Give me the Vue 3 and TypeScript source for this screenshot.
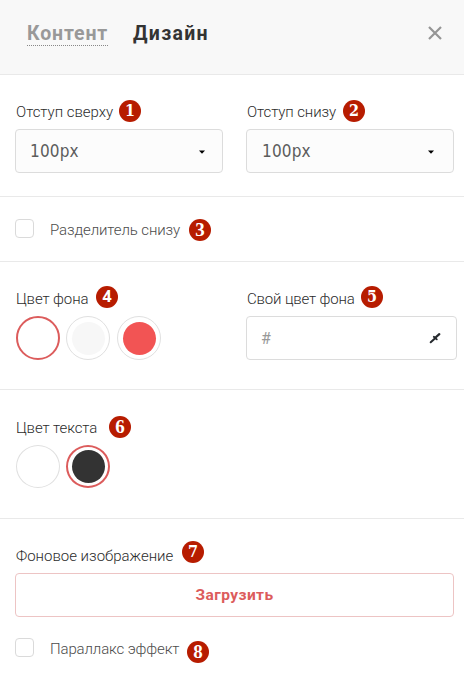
<script setup lang="ts">
import { ref } from 'vue'

interface Swatch {
  id: string
  fill: string
}

const backgrounds: Swatch[] = [
  { id: 'white', fill: '#ffffff' },
  { id: 'grey', fill: '#f7f7f7' },
  { id: 'red', fill: '#f25454' },
]
const textColors: Swatch[] = [
  { id: 'white', fill: '#ffffff' },
  { id: 'dark', fill: '#333333' },
]

const background = ref('white')
const textColor = ref('dark')
const divider = ref(false)
const parallax = ref(false)
</script>

<template>
  <main class="panel">
    <header class="head">
      <nav class="tabs">
        <a class="tab tab-link">Контент</a>
        <a class="tab tab-active">Дизайн</a>
      </nav>
      <svg class="close" viewBox="0 0 14 14"><path d="M1 1L13 13M13 1L1 13" /></svg>
    </header>

    <section class="section spacing">
      <div class="field">
        <div class="caption"><span class="label l-top">Отступ сверху</span><b class="badge b1">1</b></div>
        <div class="select">
          <span class="value">100px</span>
          <svg class="caret" viewBox="0 0 6 4"><path d="M0 0.5H6L3 3.8Z" /></svg>
        </div>
      </div>
      <div class="field">
        <div class="caption"><span class="label l-bottom">Отступ снизу</span><b class="badge b2">2</b></div>
        <div class="select select-second">
          <span class="value">100px</span>
          <svg class="caret" viewBox="0 0 6 4"><path d="M0 0.5H6L3 3.8Z" /></svg>
        </div>
      </div>
    </section>

    <section class="section divider">
      <span class="check" role="checkbox" :aria-checked="divider" @click="divider = !divider"></span>
      <span class="label soft l-divider">Разделитель снизу</span>
      <b class="badge serif b3">3</b>
    </section>

    <section class="section colors">
      <div class="field">
        <div class="caption"><span class="label l-bg">Цвет фона</span><b class="badge sans b4">4</b></div>
        <div class="swatches">
          <span
            v-for="s in backgrounds"
            :key="s.id"
            class="swatch"
            :class="{ selected: s.id === background }"
            @click="background = s.id"
          ><i class="dot" :style="{ background: s.fill }"></i></span>
        </div>
      </div>
      <div class="field">
        <div class="caption"><span class="label l-own">Свой цвет фона</span><b class="badge b5">5</b></div>
        <div class="hex">
          <span class="hash">#</span>
          <svg class="dropper" viewBox="0 0 12 12">
            <path class="tube" d="M1.7 10.3L6.2 6.2" />
            <path class="collar" d="M4.8 4.8L7.8 7.4" />
            <path class="bulb" d="M6 6L10.3 2.2" />
          </svg>
        </div>
      </div>
    </section>

    <section class="section text-color">
      <div class="caption"><span class="label l-text">Цвет текста</span><b class="badge serif b6">6</b></div>
      <div class="swatches">
        <span
          v-for="s in textColors"
          :key="s.id"
          class="swatch"
          :class="{ selected: s.id === textColor }"
          @click="textColor = s.id"
        ><i class="dot" :style="{ background: s.fill }"></i></span>
      </div>
    </section>

    <section class="section image">
      <div class="caption"><span class="label l-image">Фоновое изображение</span><b class="badge b7">7</b></div>
      <button class="upload" type="button"><span class="upload-text">Загрузить</span></button>
      <div class="parallax">
        <span class="check" role="checkbox" :aria-checked="parallax" @click="parallax = !parallax"></span>
        <span class="label soft l-parallax">Параллакс эффект</span>
        <b class="badge serif b8">8</b>
      </div>
    </section>
  </main>
</template>

<style>
body {
  background: #fff;
}
</style>

<style scoped>
* {
  box-sizing: border-box;
}
.panel {
  width: 464px;
  height: 673px;
  overflow: hidden;
  background: #fff;
  font-family: Roboto, "Noto Sans", sans-serif;
  color: #2c2c2c;
}
.head {
  display: flex;
  justify-content: space-between;
  height: 75px;
  padding: 21px 22px 0 27px;
  background: #f8f8f8;
  border-bottom: 1px solid #e9e9e9;
}
.tabs {
  display: flex;
  align-items: flex-start;
  gap: 25px;
}
.tab {
  height: 25px;
  font: 700 19.5px/25px Roboto, sans-serif;
  white-space: nowrap;
}
.tab-link {
  width: 81px;
  color: #999;
  border-bottom: 1px dotted #888;
  letter-spacing: 0.85px;
}
.tab-active {
  color: #333;
  letter-spacing: 1.3px;
}
.close {
  width: 14px;
  height: 14px;
  margin-top: 5px;
  fill: none;
  stroke: #959595;
  stroke-width: 2.2;
}
.section {
  border-bottom: 1px solid #e9e9e9;
}
.spacing {
  display: grid;
  grid-template-columns: 208px 208px;
  column-gap: 23px;
  height: 122px;
  padding: 24px 0 0 15px;
}
.caption {
  display: flex;
  align-items: flex-start;
  height: 30px;
  padding-left: 1px;
}
.label {
  font-size: 15px;
  font-weight: 300;
  line-height: 20px;
  margin-top: 3px;
  white-space: nowrap;
}
.soft {
  color: #4c4c4c;
}
.badge {
  flex: none;
  width: 22px;
  height: 22px;
  border-radius: 50%;
  background: #b71c00;
  color: #fff;
  text-align: center;
  font: 700 16px/22px "DejaVu Serif", serif;
  font-stretch: condensed;
}
.badge.serif {
  font: 700 19px/22px "Liberation Serif", serif;
}
.badge.sans {
  font: 700 16px/21px "Noto Sans", sans-serif;
}
.select,
.hex {
  display: flex;
  align-items: center;
  justify-content: space-between;
  height: 44px;
  border: 1px solid #dcdcdc;
  border-radius: 4px;
}
.select {
  background: #fcfcfc;
  padding: 0 17px 0 14px;
}
.select-second {
  padding: 0 19px 0 15px;
}
.value {
  font: 17px/42px "DejaVu Sans Condensed", "DejaVu Sans", sans-serif;
  font-stretch: condensed;
  letter-spacing: 0.15px;
  color: #5c5c5c;
}
.caret {
  width: 6px;
  height: 4px;
  margin-top: 1px;
  fill: #000;
}
.divider {
  display: flex;
  align-items: flex-start;
  height: 65px;
  padding: 22px 0 0 15px;
}
.check {
  flex: none;
  width: 19px;
  height: 19px;
  margin-right: 16px;
  border: 1px solid #dadada;
  border-radius: 4px;
}
.colors {
  display: grid;
  grid-template-columns: 208px 211px;
  column-gap: 23px;
  height: 128px;
  padding: 24px 0 0 15px;
}
.hex {
  padding: 0 15px 0 14px;
}
.hash {
  font-size: 16px;
  color: #999;
}
.dropper {
  width: 12px;
  height: 12px;
  fill: none;
  stroke: #262a2e;
  stroke-linecap: round;
}
.tube {
  stroke-width: 2;
}
.collar {
  stroke-width: 1.8;
}
.bulb {
  stroke-width: 2.3;
}
.swatches {
  display: flex;
  gap: 6px;
  padding-left: 1px;
}
.swatch {
  display: flex;
  align-items: center;
  justify-content: center;
  width: 44px;
  height: 44px;
  border: 1px solid #e0e0e0;
  border-radius: 50%;
}
.swatch:nth-child(3) {
  margin-left: 1px;
}
.swatch.selected {
  border: 2px solid #dc5c5c;
}
.dot {
  width: 33px;
  height: 33px;
  border-radius: 50%;
}
.text-color {
  height: 129px;
  padding: 25px 0 0 15px;
}
.text-color .swatch {
  height: 43px;
}
.image {
  height: 155px;
  padding: 22px 10px 0 15px;
  border: 0;
}
.image .caption {
  height: 32px;
}
.upload {
  display: block;
  width: 100%;
  height: 44px;
  padding: 0;
  border: 1px solid #edc4c4;
  border-radius: 4px;
  background: #fff;
  color: #dc5c5c;
  font: 700 15.5px/42px Roboto, sans-serif;
  letter-spacing: 0.45px;
}
.parallax {
  display: flex;
  align-items: flex-start;
  padding-top: 21px;
}
.b1 { margin: 1px 0 0 6px; }
.b2 { margin: 1px 0 0 6px; }
.b3 { margin: 0 0 0 9px; }
.b4 { margin: 0 0 0 8px; }
.b5 { margin: 0 0 0 7px; }
.b6 { margin: 1px 0 0 12px; }
.b7 { margin: 0 0 0 8px; }
.b8 { margin: 3px 0 0 8px; }
.l-top { width: 97px; letter-spacing: -0.03px; }
.l-bottom { width: 90px; letter-spacing: -0.1px; }
.l-divider { width: 130px; margin-top: 1px; letter-spacing: -0.1px; }
.l-bg { width: 72px; letter-spacing: -0.1px; }
.l-own { width: 107px; letter-spacing: -0.15px; }
.l-text { width: 81px; letter-spacing: -0.1px; }
.l-image { width: 158px; margin-top: 5px; }
.l-parallax { width: 129px; margin-top: 1px; letter-spacing: -0.13px; }
</style>
